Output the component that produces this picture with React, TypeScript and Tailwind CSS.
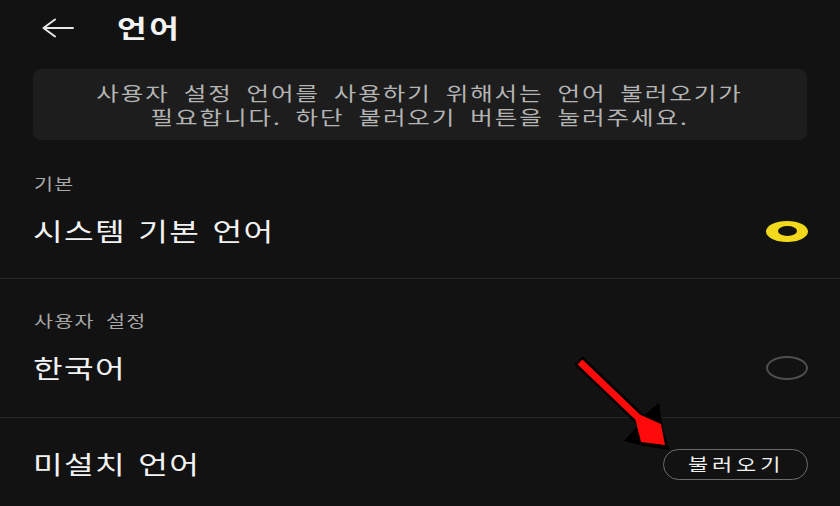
import React from 'react'

const font = { fontFamily: '"Noto Sans CJK KR", "Noto Sans", sans-serif' }

// the reference is a phone screenshot stretched sideways, so text is widened
const Wide: React.FC<{ children: React.ReactNode; center?: boolean }> = ({ children, center }) => (
    <span
        className={`inline-block scale-x-[1.29] whitespace-nowrap ${center ? 'origin-center' : 'origin-left'}`}
    >
        {children}
    </span>
)

const Radio: React.FC<{ checked: boolean }> = ({ checked }) => {
    if (checked) {
        return (
            <span className="flex h-[21px] w-[42px] items-center justify-center rounded-[50%] bg-[#f3d91c]">
                <span className="h-[10px] w-[19px] rounded-[50%] bg-[#121212]" />
            </span>
        )
    }
    return <span className="h-[24px] w-[42px] rounded-[50%] border-2 border-[#4f4f4f]" />
}

const SectionLabel: React.FC<{ text: string }> = ({ text }) => (
    <div className="h-[22px] px-[34px] text-[16px] leading-[22px] tracking-[1px] text-[#a9a9a9] [word-spacing:4px]">
        <Wide>{text}</Wide>
    </div>
)

const Row: React.FC<{ text: string; right?: React.ReactNode; height: string }> = ({
    text,
    right,
    height,
}) => (
    <div className={`flex items-center justify-between pl-[33px] pr-[32px] ${height}`}>
        <span className="flex-1 text-[25px] tracking-[1px] text-[#f2f2f2] [word-spacing:3px]">
            <Wide>{text}</Wide>
        </span>
        {right}
    </div>
)

const App: React.FC = () => {
    return (
        <div className="relative h-[506px] w-[840px] overflow-hidden bg-[#121212]" style={font}>
            {/* header */}
            <div className="flex h-[55px] items-center pl-[42px]">
                <svg width="32" height="20" viewBox="0 0 32 20" fill="none">
                    <path
                        d="M31 10H1.5M1.5 10L13 1.5M1.5 10L13 18.5"
                        stroke="#e8e8e8"
                        strokeWidth="2"
                        strokeLinecap="round"
                        strokeLinejoin="round"
                    />
                </svg>
                <h1 className="ml-[43px] text-[25px] font-bold tracking-[2px] text-[#f2f2f2]">
                    <Wide>언어</Wide>
                </h1>
            </div>

            {/* notice */}
            <div className="mx-[33px] mt-[14px] flex h-[71px] flex-col justify-center rounded-[8px] bg-[#1d1d1d] text-center text-[19px] leading-[24px] tracking-[1.5px] text-[#b4b4b4] [word-spacing:5px]">
                <p className="h-[24px]">
                    <Wide center>사용자 설정 언어를 사용하기 위해서는 언어 불러오기가</Wide>
                </p>
                <p className="h-[24px]">
                    <Wide center>필요합니다. 하단 불러오기 버튼을 눌러주세요.</Wide>
                </p>
            </div>

            {/* default */}
            <div className="pt-[32px] pb-[10px]">
                <SectionLabel text="기본" />
                <Row text="시스템 기본 언어" height="h-[74px]" right={<Radio checked />} />
            </div>
            <div className="h-px bg-[#262626]" />

            {/* user setting */}
            <div className="pt-[30px] pb-[12px]">
                <SectionLabel text="사용자 설정" />
                <Row text="한국어" height="h-[74px]" right={<Radio checked={false} />} />
            </div>
            <div className="h-px bg-[#262626]" />

            {/* not installed */}
            <Row
                text="미설치 언어"
                height="h-[92px]"
                right={
                    <button className="flex h-[31px] w-[145px] items-center rounded-full border-[1.5px] border-[#6c6c6c] pl-[24px] text-[17px] tracking-[3px] text-[#f0f0f0]">
                        <Wide>불러오기</Wide>
                    </button>
                }
            />

            {/* annotation arrow */}
            <svg
                className="pointer-events-none absolute left-0 top-0"
                width="840"
                height="506"
                viewBox="0 0 840 506"
            >
                <polygon
                    points="582.6,356.2 644.1,414.9 659,403 663,430 670,450 643,446 624,441 638,425.6 574.4,364.8"
                    fill="#000"
                />
                <polygon
                    points="582.4,359.5 640.2,414.8 661,424 665,445 641,442 635.4,419.8 577.6,364.5"
                    fill="#ff0a0a"
                />
            </svg>
        </div>
    )
}

export default App
